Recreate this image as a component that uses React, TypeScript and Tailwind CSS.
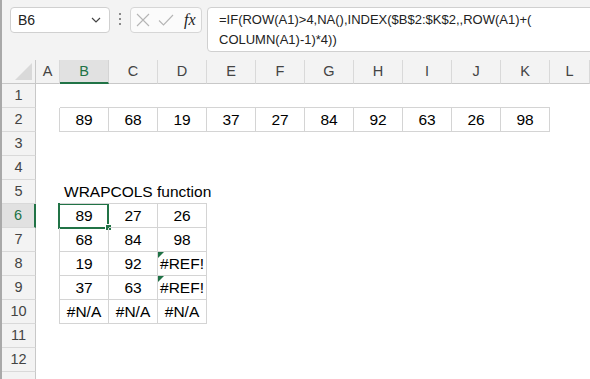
import React from "react";

const COLS = ["A", "B", "C", "D", "E", "F", "G", "H", "I", "J", "K", "L"];
const ROWS = [1, 2, 3, 4, 5, 6, 7, 8, 9, 10, 11, 12, 13];

const data: Record<string, string> = {
  B2: "89", C2: "68", D2: "19", E2: "37", F2: "27", G2: "84", H2: "92", I2: "63", J2: "26", K2: "98",
  B5: "WRAPCOLS function",
  B6: "89", C6: "27", D6: "26",
  B7: "68", C7: "84", D7: "98",
  B8: "19", C8: "92", D8: "#REF!",
  B9: "37", C9: "63", D9: "#REF!",
  B10: "#N/A", C10: "#N/A", D10: "#N/A",
};

function inRange(r: number, c: number) {
  if (r === 2 && c >= 1 && c <= 10) return true;
  if (r >= 6 && r <= 10 && c >= 1 && c <= 3) return true;
  return false;
}

const cellFont = { fontFamily: '"Liberation Sans", Arial, sans-serif' };
const uiFont = { fontFamily: '"Liberation Sans", "Noto Sans", sans-serif' };

function Cell({ r, c }: { r: number; c: number }) {
  const key = COLS[c] + r;
  const v = data[key];
  const right = inRange(r, c) || inRange(r, c + 1);
  const bottom = inRange(r, c) || inRange(r + 1, c);
  const cls = [
    "relative h-[24px] flex items-center text-[15.5px] text-black whitespace-nowrap",
    right ? "border-r border-r-[#d4d4d4]" : "",
    bottom ? "border-b border-b-[#d4d4d4]" : "",
    key === "B5" ? "justify-start pl-[4px] overflow-visible z-10" : "justify-center overflow-visible",
  ].join(" ");
  return (
    <div className={cls} style={cellFont}>
      {key === "D8" || key === "D9" ? (
        <span className="absolute left-0 top-0 w-0 h-0 border-t-[6px] border-t-[#1e7145] border-r-[6px] border-r-transparent" />
      ) : null}
      {v ? <span className="pt-[1px]">{v}</span> : null}
      {key === "B6" ? (
        <>
          <span className="absolute left-[-2px] top-[-1px] w-[51px] h-[26px] border-2 border-[#217346]" />
          <span className="absolute left-[45px] top-[20px] w-[7px] h-[7px] bg-[#217346] border border-white" />
        </>
      ) : null}
    </div>
  );
}

export default function App() {
  return (
    <div className="w-[590px] h-[379px] overflow-hidden bg-white border-l-2 border-l-[#a9a9a9] select-none">
      {/* Formula bar */}
      <div className="h-[60px] bg-[#f3f3f3] flex items-start pl-[8px] pt-[7px]" style={uiFont}>
        <div className="w-[100px] h-[26px] bg-white border border-[#d0d0d0] rounded-[4px] flex items-center justify-between pl-[7px] pr-[8px]">
          <span className="text-[14px] text-[#222]">B6</span>
          <svg width="10" height="6" viewBox="0 0 10 6" fill="none">
            <path d="M1 1 L5 5 L9 1" stroke="#444" strokeWidth="1.2" />
          </svg>
        </div>
        <div className="ml-[9px] mt-[6px] flex flex-col gap-[3px]">
          <span className="w-[2px] h-[2px] bg-[#8a8a8a]" />
          <span className="w-[2px] h-[2px] bg-[#8a8a8a]" />
          <span className="w-[2px] h-[2px] bg-[#8a8a8a]" />
        </div>
        <div className="ml-[9px] w-[72px] h-[26px] bg-[#fbfbfb] border border-[#d6d6d6] rounded-[4px] flex items-center pl-[5px] gap-[8px]">
          <svg width="14" height="14" viewBox="0 0 14 14" fill="none">
            <path d="M1 1 L13 13 M13 1 L1 13" stroke="#b5b5b5" strokeWidth="1.1" />
          </svg>
          <svg width="16" height="14" viewBox="0 0 16 14" fill="none">
            <path d="M1 7.5 L5.5 12 L15 2" stroke="#b5b5b5" strokeWidth="1.1" />
          </svg>
          <span className="text-[16px] italic text-[#222] leading-none ml-[2px]" style={{ fontFamily: '"Liberation Serif", "Times New Roman", serif' }}>
            fx
          </span>
        </div>
        <div className="ml-[5px] flex-1 -mr-[10px] h-[45px] bg-white border border-[#d0d0d0] rounded-[4px] pl-[11px] pt-[2px] text-[13px] leading-[20px] text-[#222]">
          <div>=IF(ROW(A1)&gt;4,NA(),INDEX($B$2:$K$2,,ROW(A1)+(</div>
          <div>COLUMN(A1)-1)*4))</div>
        </div>
      </div>

      {/* Sheet */}
      <div className="grid grid-cols-[34px_24px_repeat(10,49px)_1fr]">
        {/* header row */}
        <div className="h-[24px] bg-[#f3f3f3] border-r border-r-[#c8c8c8] border-b border-b-[#c8c8c8] relative">
          <svg className="absolute left-[13px] top-[3px]" width="17" height="17" viewBox="0 0 17 17">
            <polygon points="17,0 17,17 0,17" fill="#d9d9d9" />
          </svg>
        </div>
        {COLS.map((c) => (
          <div
            key={c}
            className={
              c === "B"
                ? "h-[24px] bg-[#e1e1e1] border-r border-r-[#d4d4d4] border-b-2 border-b-[#217346] flex items-center justify-center text-[14.5px] text-[#217346]"
                : "h-[24px] bg-[#f3f3f3] border-r border-r-[#d9d9d9] border-b border-b-[#c8c8c8] flex items-center justify-center text-[14.5px] text-[#444]"
            }
            style={uiFont}
          >
            <span className="pt-[1px]">{c}</span>
          </div>
        ))}
        {ROWS.map((r) => (
          <React.Fragment key={r}>
            <div
              className={
                r === 6
                  ? "h-[24px] bg-[#e1e1e1] border-r-2 border-r-[#217346] border-b border-b-[#d9d9d9] flex items-center justify-center text-[14.5px] text-[#217346]"
                  : "h-[24px] bg-[#f3f3f3] border-r border-r-[#c8c8c8] border-b border-b-[#d9d9d9] flex items-center justify-center text-[14.5px] text-[#444]"
              }
              style={uiFont}
            >
              {r <= 12 ? <span className="pt-[1px]">{r}</span> : null}
            </div>
            {COLS.map((_, ci) => (
              <Cell key={ci} r={r} c={ci} />
            ))}
          </React.Fragment>
        ))}
      </div>
    </div>
  );
}
